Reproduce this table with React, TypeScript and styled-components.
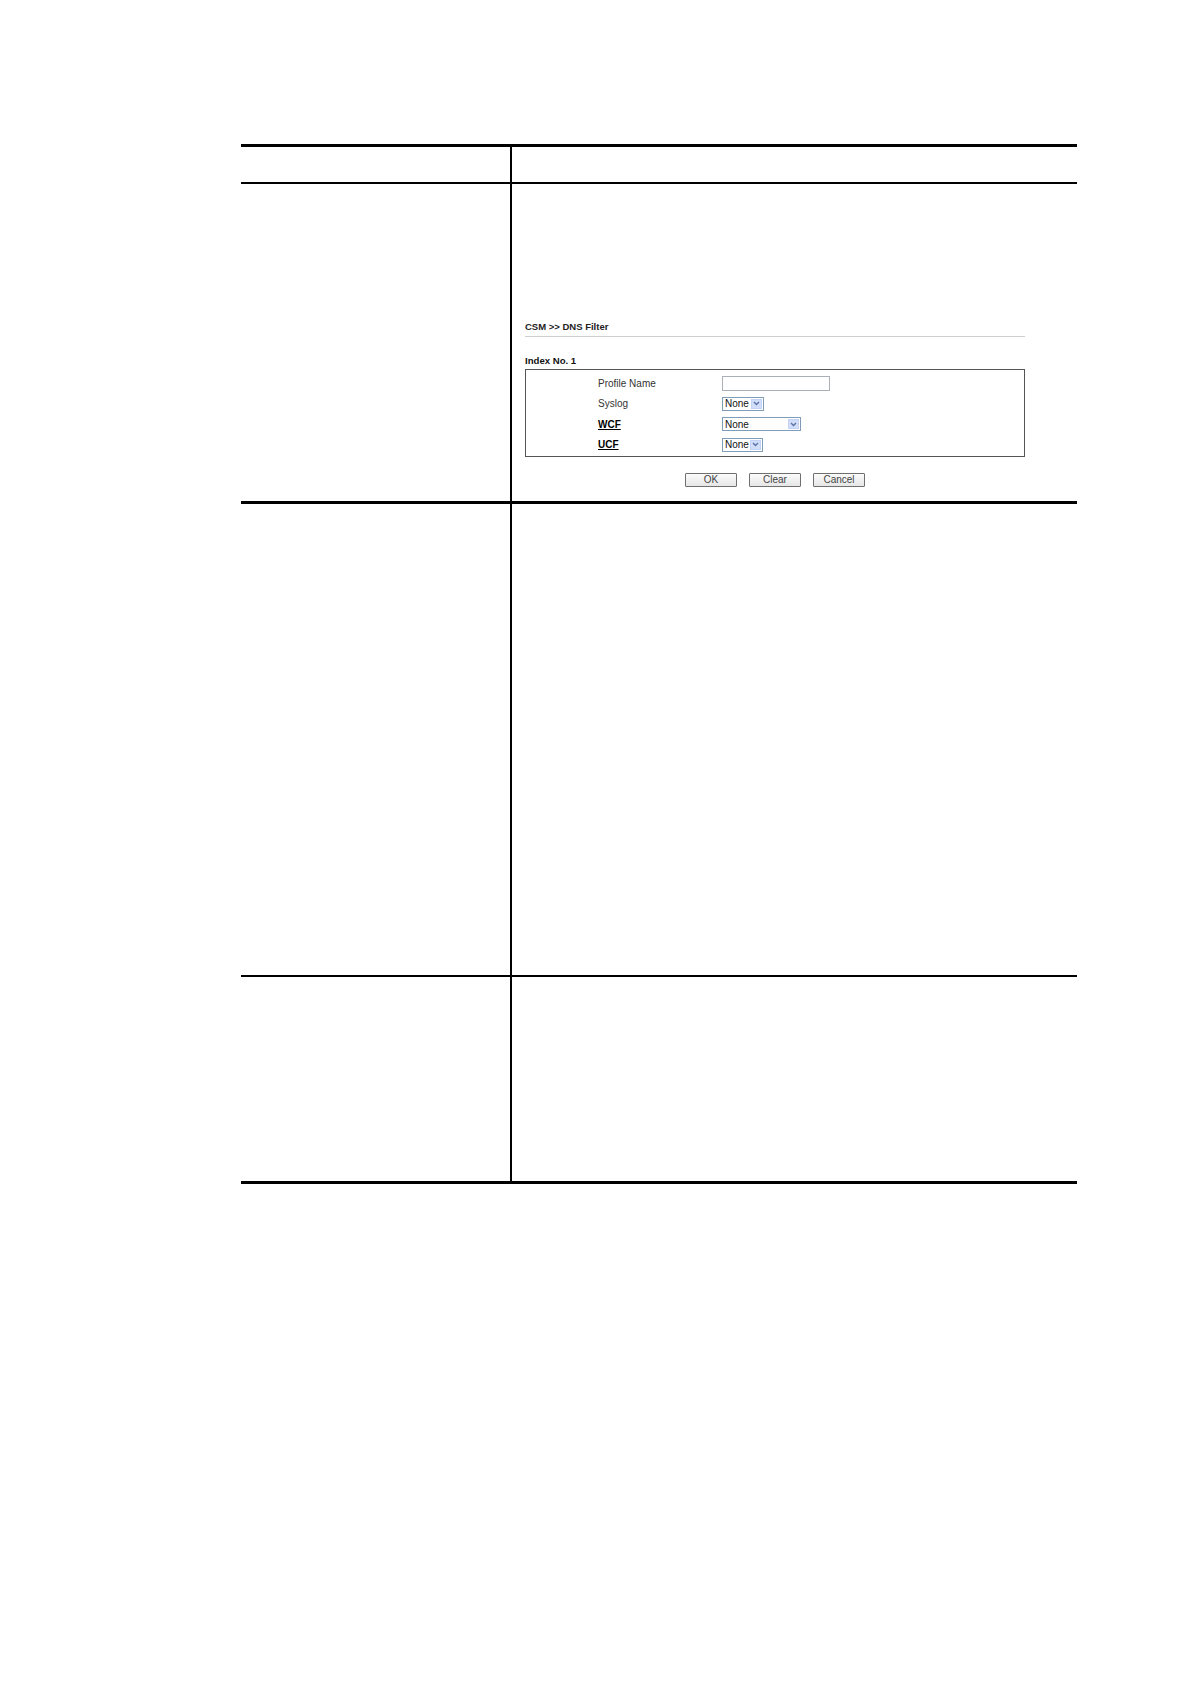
import React from "react";
import styled, { createGlobalStyle } from "styled-components";

const Global = createGlobalStyle`
  html, body { margin: 0; padding: 0; background: #ffffff; }
  body { font-family: "Liberation Sans", Arial, sans-serif; }
`;

const Page = styled.div`
  width: 1190px;
  min-height: 1684px;
  box-sizing: border-box;
  padding: 144px 0 0 241px;
  background: #fff;
`;

const Table = styled.div`
  width: 836px;
  border-top: 3px solid #000;
  display: flex;
  flex-direction: column;
`;

const Row = styled.div<{ $h?: number; $rule: number }>`
  display: grid;
  grid-template-columns: 271px 1fr;
  min-height: ${(p) => p.$h ?? 0}px;
  border-bottom: ${(p) => p.$rule}px solid #000;
`;

const LeftCell = styled.div`
  box-sizing: border-box;
  border-right: 2px solid #000;
`;

const RightCell = styled.div<{ $top?: number; $bottom?: number }>`
  padding: ${(p) => p.$top ?? 0}px 0 ${(p) => p.$bottom ?? 0}px 13px;
`;

const Shot = styled.div`
  width: 500px;
  font-family: "Liberation Sans", Arial, sans-serif;
  font-size: 10px;
  color: #333;
`;

const Title = styled.div`
  font-size: 9.5px;
  font-weight: bold;
  line-height: 12px;
  color: #222;
  padding-bottom: 3px;
  border-bottom: 1px solid #cfcfcf;
`;

const IndexLabel = styled.div`
  margin-top: 18px;
  font-size: 9.6px;
  font-weight: bold;
  line-height: 12px;
  color: #111;
`;

const Box = styled.div`
  margin-top: 2px;
  border: 1px solid #555;
  padding: 3px 0 1px 72px;
  display: grid;
  grid-template-columns: 124px 1fr;
  grid-auto-rows: 20.5px;
  align-items: center;
`;

const Label = styled.span<{ $link?: boolean }>`
  font-size: 10px;
  color: ${(p) => (p.$link ? "#000" : "#333")};
  font-weight: ${(p) => (p.$link ? "bold" : "normal")};
  text-decoration: ${(p) => (p.$link ? "underline" : "none")};
`;

const TextInput = styled.div`
  width: 108px;
  height: 15px;
  box-sizing: border-box;
  border: 1px solid #a9b0b7;
  background: #fff;
`;

const Select = styled.div<{ $w: number }>`
  width: ${(p) => p.$w}px;
  height: 14px;
  box-sizing: border-box;
  border: 1px solid #7f9db9;
  background: #fff;
  display: flex;
  align-items: center;
  justify-content: space-between;
  font-size: 10px;
  color: #111;
  padding-left: 2px;
`;

const Arrow = styled.span`
  width: 11px;
  height: 10px;
  margin-right: 1px;
  box-sizing: border-box;
  background: #d2def9;
  border: 1px solid #c3d2f6;
  display: flex;
  align-items: center;
  justify-content: center;
`;

const Buttons = styled.div`
  margin-top: 16px;
  display: flex;
  justify-content: center;
  gap: 12px;
`;

const Button = styled.button`
  width: 52px;
  height: 14px;
  padding: 0;
  margin: 0;
  box-sizing: border-box;
  border: 1px solid #6f6f6f;
  border-radius: 1px;
  background: linear-gradient(#fbfbfb, #e6e6e6);
  font-family: "Liberation Sans", Arial, sans-serif;
  font-size: 10px;
  line-height: 12px;
  color: #444;
`;

const Chevron = () => (
  <svg width="7" height="5" viewBox="0 0 7 5">
    <polyline points="1,1 3.5,3.5 6,1" fill="none" stroke="#5a74a8" strokeWidth="1.4" />
  </svg>
);

const Dropdown = ({ w }: { w: number }) => (
  <Select $w={w}>
    <span>None</span>
    <Arrow>
      <Chevron />
    </Arrow>
  </Select>
);

export default function App() {
  return (
    <>
      <Global />
      <Page>
        <Table>
          <Row $h={35} $rule={2}>
            <LeftCell />
            <RightCell />
          </Row>
          <Row $rule={3}>
            <LeftCell />
            <RightCell $top={137} $bottom={14}>
              <Shot>
                <Title>CSM &gt;&gt; DNS Filter</Title>
                <IndexLabel>Index No. 1</IndexLabel>
                <Box>
                  <Label>Profile Name</Label>
                  <TextInput />
                  <Label>Syslog</Label>
                  <Dropdown w={42} />
                  <Label $link>WCF</Label>
                  <Dropdown w={79} />
                  <Label $link>UCF</Label>
                  <Dropdown w={41} />
                </Box>
                <Buttons>
                  <Button>OK</Button>
                  <Button>Clear</Button>
                  <Button>Cancel</Button>
                </Buttons>
              </Shot>
            </RightCell>
          </Row>
          <Row $h={471} $rule={2}>
            <LeftCell />
            <RightCell />
          </Row>
          <Row $h={204} $rule={3}>
            <LeftCell />
            <RightCell />
          </Row>
        </Table>
      </Page>
    </>
  );
}
